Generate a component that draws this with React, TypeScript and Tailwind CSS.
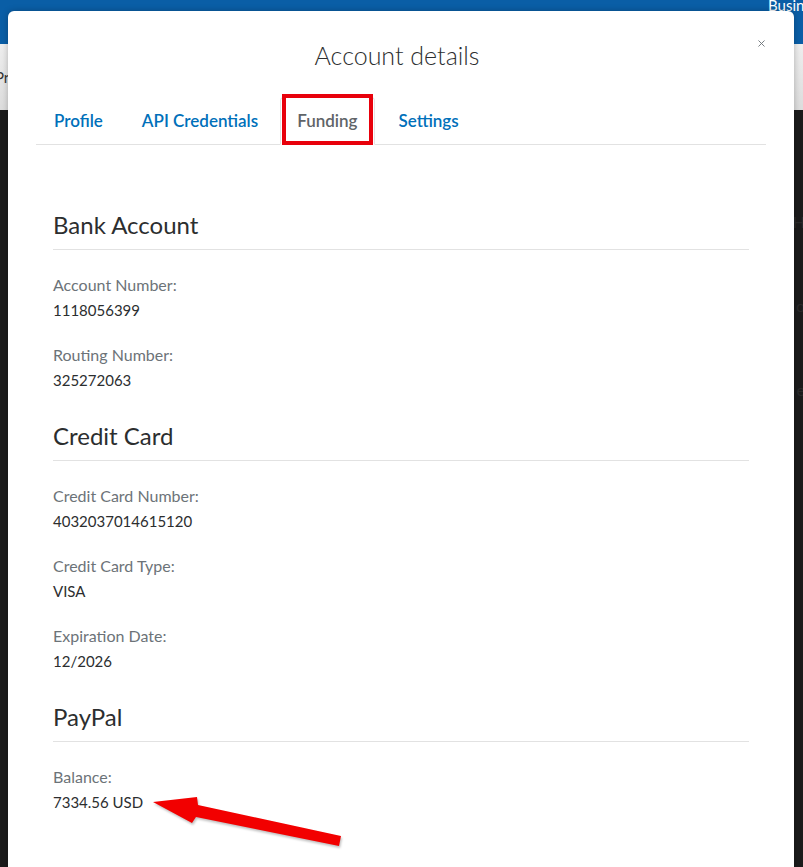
import { X } from 'lucide-react';

const tabs = [
  { name: 'Profile', pad: 'pl-[18px] pr-[20px]' },
  { name: 'API Credentials', pad: 'pl-[19px] pr-[22px]' },
  { name: 'Funding', pad: 'pl-[16px] pr-[17px]' },
  { name: 'Settings', pad: 'pl-[23px]' },
];

const sections = [
  {
    title: 'Bank Account',
    fields: [
      { label: 'Account Number:', value: '1118056399' },
      { label: 'Routing Number:', value: '325272063' },
    ],
  },
  {
    title: 'Credit Card',
    fields: [
      { label: 'Credit Card Number:', value: '4032037014615120' },
      { label: 'Credit Card Type:', value: 'VISA' },
      { label: 'Expiration Date:', value: '12/2026' },
    ],
  },
  {
    title: 'PayPal',
    fields: [{ label: 'Balance:', value: '7334.56 USD' }],
  },
];

function Field({ label, value }: { label: string; value: string }) {
  return (
    <div className="flex flex-col">
      <span className="text-[16px] leading-[22px] text-[#6c7378]">{label}</span>
      <span className="mt-[3px] text-[15px] leading-[22px] text-[#2c2e2f]">{value}</span>
    </div>
  );
}

function RedArrow() {
  return (
    <svg
      className="absolute left-[150px] top-[790px] drop-shadow-[1px_2px_1px_rgba(0,0,0,0.25)]"
      width="200"
      height="62"
      viewBox="0 0 200 62"
    >
      <polygon
        points="3,12 47,7 48,15 191,46 189,56 46,27 42,33"
        fill="#f20000"
      />
    </svg>
  );
}

export default function App() {
  return (
    <div
      className="relative h-[867px] w-full overflow-hidden bg-[#1b1b1b]"
      style={{ fontFamily: 'Lato, "Noto Sans", Arial, sans-serif' }}
    >
      {/* page behind the modal */}
      <div className="flex h-[44px] bg-[#0a5ea6]">
        <div className="w-[768px] shrink-0" />
        <span className="-mt-[6px] whitespace-nowrap text-[15px] text-white">Business</span>
      </div>
      <div className="flex h-[66px] items-center bg-gradient-to-b from-[#eeeeee] to-[#dcdcdc]">
        <span className="-ml-[5px] text-[15px] text-[#333]">Pro</span>
      </div>
      <div className="flex flex-col items-end gap-[60px] pt-[100px] text-[16px] text-[#2a2a2a]">
        <span className="-mr-[2px]">H</span>
        <span className="-mr-[2px]">o</span>
        <span className="-mr-[2px]">e</span>
      </div>

      {/* modal */}
      <div className="absolute left-[8px] top-[11px] h-[900px] w-[786px] rounded-[6px] bg-white shadow-[0_0_6px_rgba(0,0,0,0.25)]">
        <button className="absolute right-[27px] top-[27px] text-[#6c7378]">
          <X size={11} strokeWidth={2} />
        </button>

        <h2 className="pr-[8px] pt-[26px] text-center text-[25px] font-light leading-[36px] text-[#2c2e2f]">
          Account details
        </h2>

        {/* tabs */}
        <div className="mx-[28px] mt-[24px] flex h-[48px] border-b border-[#e2e2e2]">
          {tabs.map((tab) => {
            const active = tab.name === 'Funding';
            return (
              <div
                key={tab.name}
                className={
                  active
                    ? `relative -mb-px flex items-center rounded-t-[4px] border border-b-white border-[#e4e4e4] bg-white ${tab.pad} text-[17px] font-semibold text-[#5f6468]`
                    : `flex items-center ${tab.pad} text-[17px] font-semibold text-[#0070ba]`
                }
              >
                {tab.name}
                {active && (
                  <div className="absolute -top-[4px] left-[1px] h-[51px] w-[91px] border-[4px] border-[#e8000b]" />
                )}
              </div>
            );
          })}
        </div>

        {/* funding content */}
        <div className="mx-[45px] mt-[65px] flex flex-col gap-[30px]">
          {sections.map((section) => (
            <section key={section.title} className="flex flex-col">
              <h3 className="border-b border-[#e2e2e2] pb-[9px] text-[24px] leading-[30px] text-[#2c2e2f]">
                {section.title}
              </h3>
              <div className="mt-[24px] flex flex-col gap-[23px]">
                {section.fields.map((f) => (
                  <Field key={f.label} label={f.label} value={f.value} />
                ))}
              </div>
            </section>
          ))}
        </div>
      </div>

      <RedArrow />
    </div>
  );
}
